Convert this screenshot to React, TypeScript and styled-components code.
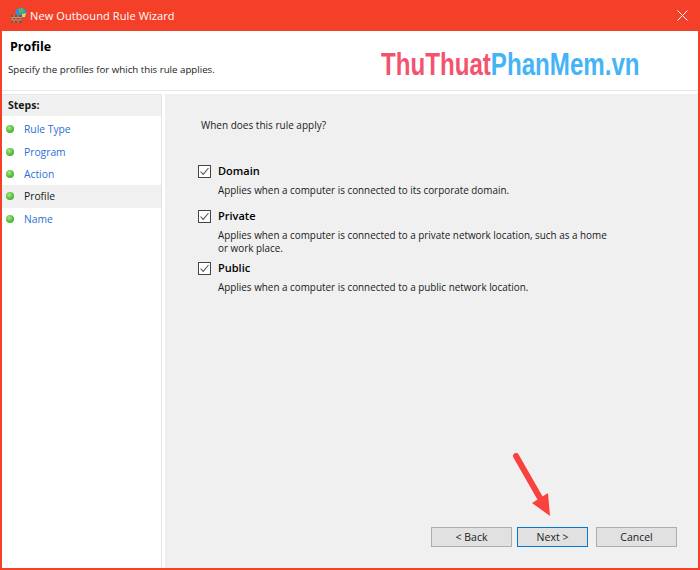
import styled, { createGlobalStyle } from 'styled-components';

const UI_FONT = '"Open Sans", "Noto Sans", "Liberation Sans", sans-serif';

const Colors = {
  Frame: '#f54029',
  Panel: '#f0f0f0',
  Link: '#2a6fd6',
  Text: '#1a1a1a',
};

const GlobalStyle = createGlobalStyle`
  html, body {
    margin: 0;
    padding: 0;
    background: ${Colors.Frame};
  }
  #root {
    width: 700px;
    height: 570px;
  }
`;

const Window = styled.div`
  position: relative;
  box-sizing: border-box;
  width: 700px;
  height: 570px;
  display: flex;
  flex-direction: column;
  padding: 0 2px 2px 2px;
  background: ${Colors.Frame};
  font-family: ${UI_FONT};
  font-size: 10.3px;
  color: ${Colors.Text};
  overflow: hidden;
`;

const TitleBar = styled.div`
  height: 31px;
  flex: none;
  display: flex;
  align-items: center;
  padding: 0 9px 0 8px;
  color: #fff;
  font-size: 11px;
  gap: 3px;
`;

const TitleText = styled.span`
  flex: 1;
  letter-spacing: 0.1px;
`;

const CloseIcon = styled.svg`
  width: 11px;
  height: 11px;
  margin-right: 1px;
`;

const Header = styled.div`
  height: 59px;
  flex: none;
  box-sizing: border-box;
  background: #fff;
  padding: 8px 0 0 6px;
  position: relative;
`;

const HeaderTitle = styled.div`
  font-size: 12.5px;
  font-weight: 700;
  color: #000;
  line-height: 16px;
  margin-left: 2px;
`;

const HeaderSub = styled.div`
  font-size: 9.7px;
  line-height: 14px;
  margin-top: 8px;
`;

const Logo = styled.div`
  position: absolute;
  left: 379px;
  top: 17px;
  font-family: "Liberation Sans", sans-serif;
  font-size: 31px;
  line-height: 34px;
  font-weight: 700;
  white-space: nowrap;
  transform: scaleX(0.778);
  transform-origin: left center;
`;

const LogoRed = styled.span`
  color: #f4536f;
`;

const LogoBlue = styled.span`
  color: #45b4f7;
`;

const Body = styled.div`
  flex: 1;
  min-height: 0;
  display: flex;
  background: #fff;
  border-top: 1px solid #e8e8e8;
  padding-top: 3px;
`;

const Sidebar = styled.div`
  width: 160px;
  flex: none;
  background: #fff;
  border-right: 1px solid #e4e4e4;
  border-top: 1px solid #e8e8e8;
  box-sizing: border-box;
`;

const StepsLabel = styled.div`
  height: 21px;
  background: ${Colors.Panel};
  font-weight: 700;
  font-size: 10.5px;
  line-height: 21px;
  padding-left: 6px;
  margin-bottom: 2px;
`;

const Step = styled.div<{ $active?: boolean }>`
  height: 22.4px;
  display: flex;
  align-items: center;
  gap: 10px;
  padding-left: 4px;
  background: ${p => (p.$active ? Colors.Panel : 'transparent')};
  color: ${p => (p.$active ? Colors.Text : Colors.Link)};
`;

const Dot = styled.span`
  width: 8px;
  height: 8px;
  border-radius: 50%;
  flex: none;
  background: radial-gradient(circle at 40% 35%, #a8e890 0%, #5cc03c 50%, #3c9a28 100%);
`;

const Content = styled.div`
  flex: 1;
  margin-left: 3px;
  background: ${Colors.Panel};
  padding: 24px 0 0 36px;
  display: flex;
  flex-direction: column;
`;

const Question = styled.div`
  font-size: 10px;
  line-height: 14px;
  margin-bottom: 32px;
`;

const Option = styled.div<{ $tall?: boolean }>`
  display: grid;
  grid-template-columns: 13px 1fr;
  align-content: start;
  column-gap: 7px;
  row-gap: 6px;
  margin-left: -3px;
  height: ${p => (p.$tall ? 52 : 45)}px;
`;

const Check = styled.svg`
  width: 13px;
  height: 13px;
  margin-top: 1px;
`;

const OptionName = styled.div`
  font-weight: 600;
  font-size: 11px;
  line-height: 14px;
  color: #000;
`;

const OptionText = styled.div`
  grid-column: 2;
  font-size: 9.9px;
  line-height: 13px;
  width: 396px;
`;

const Footer = styled.div`
  margin-top: auto;
  margin-bottom: 21px;
  margin-left: 230px;
  display: flex;
`;

const Button = styled.div<{ $primary?: boolean; $w: number; $gap: number }>`
  box-sizing: border-box;
  width: ${p => p.$w}px;
  height: 20px;
  margin-right: ${p => p.$gap}px;
  background: #e1e1e1;
  border: ${p => (p.$primary ? '1.5px solid #0078d7' : '1px solid #adadad')};
  display: flex;
  align-items: center;
  justify-content: center;
  font-size: 10.5px;
`;

const Arrow = styled.svg`
  position: absolute;
  left: 505px;
  top: 445px;
  width: 60px;
  height: 80px;
`;

const FirewallIcon = () => (
  <svg width="17" height="17" viewBox="0 0 17 17">
    <circle cx="11" cy="6" r="5.5" fill="#2f8fe0" />
    <path d="M8 2 L13 1 L14 5 L10 7 Z" fill="#58b848" />
    <path d="M12 7 L16 6 L15 10 L12 10 Z" fill="#e8d24a" />
    <rect x="1" y="8" width="11" height="8" fill="#9c4a30" />
    <path d="M1 10.5 H12 M1 13 H12 M4 8 V10.5 M8 8 V10.5 M2.5 10.5 V13 M6 10.5 V13 M10 10.5 V13 M4 13 V16 M8 13 V16" stroke="#d9a48e" strokeWidth="0.7" />
  </svg>
);

const CheckBox = () => (
  <Check viewBox="0 0 13 13">
    <rect x="0.5" y="0.5" width="12" height="12" fill="#fff" stroke="#444" />
    <path d="M2.5 6.5 L5.2 9.4 L10.5 3" fill="none" stroke="#555" strokeWidth="1.1" />
  </Check>
);

const steps = ['Rule Type', 'Program', 'Action', 'Profile', 'Name'];

const options = [
  { name: 'Domain', text: 'Applies when a computer is connected to its corporate domain.' },
  {
    name: 'Private',
    text: 'Applies when a computer is connected to a private network location, such as a home or work place.',
    tall: true,
  },
  { name: 'Public', text: 'Applies when a computer is connected to a public network location.' },
];

export default function App() {
  return (
    <Window>
      <GlobalStyle />
      <TitleBar>
        <FirewallIcon />
        <TitleText>New Outbound Rule Wizard</TitleText>
        <CloseIcon viewBox="0 0 11 11">
          <path d="M0.5 0.5 L10.5 10.5 M10.5 0.5 L0.5 10.5" stroke="#fff" strokeWidth="1" />
        </CloseIcon>
      </TitleBar>
      <Header>
        <HeaderTitle>Profile</HeaderTitle>
        <HeaderSub>Specify the profiles for which this rule applies.</HeaderSub>
        <Logo>
          <LogoRed>ThuThuat</LogoRed>
          <LogoBlue>PhanMem.vn</LogoBlue>
        </Logo>
      </Header>
      <Body>
        <Sidebar>
          <StepsLabel>Steps:</StepsLabel>
          {steps.map(s => (
            <Step key={s} $active={s === 'Profile'}>
              <Dot />
              {s}
            </Step>
          ))}
        </Sidebar>
        <Content>
          <Question>When does this rule apply?</Question>
          {options.map(o => (
            <Option key={o.name} $tall={o.tall}>
              <CheckBox />
              <OptionName>{o.name}</OptionName>
              <OptionText>{o.text}</OptionText>
            </Option>
          ))}
          <Footer>
            <Button $w={81} $gap={5}>&lt; Back</Button>
            <Button $w={71} $gap={8} $primary>Next &gt;</Button>
            <Button $w={81} $gap={0}>Cancel</Button>
          </Footer>
        </Content>
      </Body>
      <Arrow viewBox="0 0 60 80">
        <path d="M11 11 L39 60" stroke="#f9423f" strokeWidth="6" strokeLinecap="round" fill="none" />
        <path d="M45 71 L27 58 L43 48 Z" fill="#f9423f" />
      </Arrow>
    </Window>
  );
}
